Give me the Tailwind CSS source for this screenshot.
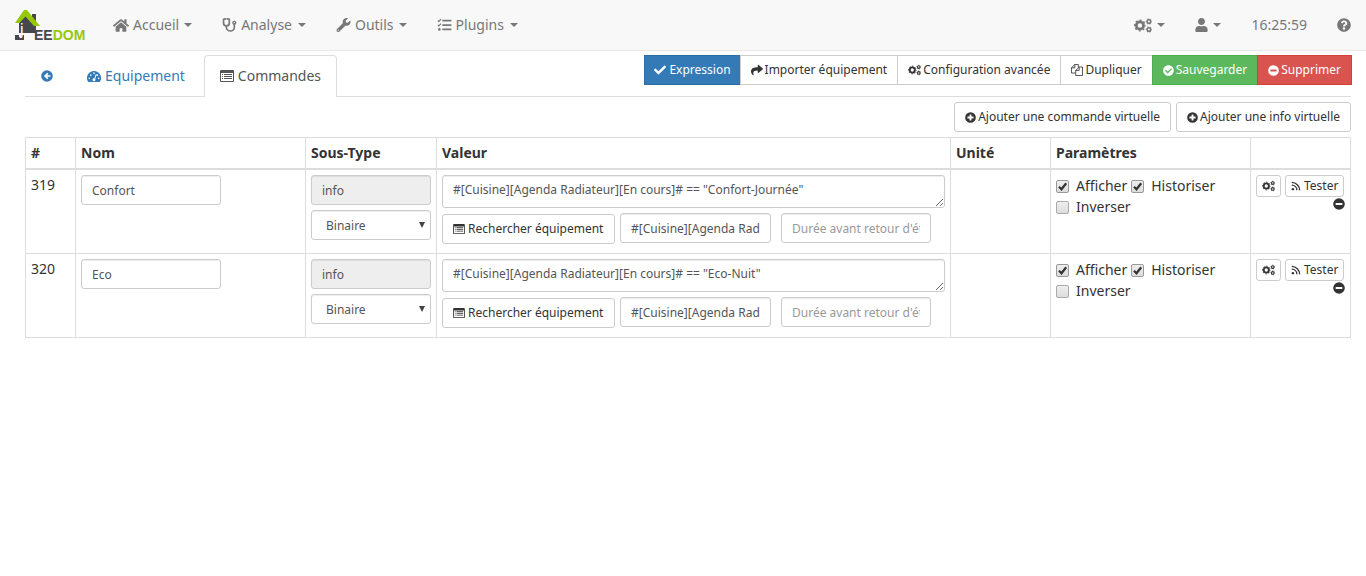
<!DOCTYPE html>
<html lang="fr">
<head>
<meta charset="utf-8">
<meta name="viewport" content="width=device-width, initial-scale=1">
<title>Jeedom - Commandes</title>
<script src="https://cdn.jsdelivr.net/npm/@tailwindcss/browser@4"></script>
</head>
<body class="bg-white font-['Noto_Sans',sans-serif] text-sm leading-5 text-[#333]">

<svg class="hidden" aria-hidden="true">
  <symbol id="home" viewBox="0 0 576 512"><path d="M280 150 96 301v163a16 16 0 0 0 16 16h112a16 16 0 0 0 16-16v-112h96v112a16 16 0 0 0 16 16h112a16 16 0 0 0 16-16V301L297 150a14 14 0 0 0-17 0z"/><path d="M572 251 488 182V44a12 12 0 0 0-12-12h-56a12 12 0 0 0-12 12v72l-90-74a48 48 0 0 0-61 0L4 251a12 12 0 0 0-1 17l25 31a12 12 0 0 0 17 2L280 107a14 14 0 0 1 16 0l235 194a12 12 0 0 0 17-2l26-31a12 12 0 0 0-2-17z"/></symbol>
  <symbol id="steth" viewBox="0 0 512 512"><path d="M110 34 38 50v130a106 106 0 0 0 212 0V50l-72-16M144 286v60a134 120 0 0 0 288 0V210" fill="none" stroke="currentColor" stroke-width="62" stroke-linejoin="round" stroke-linecap="round"/><circle cx="432" cy="176" r="54" fill="none" stroke="currentColor" stroke-width="48"/></symbol>
  <symbol id="wrench" viewBox="0 0 512 512"><path d="M507.73 109.1c-2.24-9.03-13.54-12.09-20.12-5.51l-74.36 74.36-67.88-11.31-11.31-67.88 74.36-74.36c6.62-6.62 3.43-17.9-5.66-20.16-47.38-11.74-99.55.91-136.58 37.93-39.64 39.64-50.55 97.1-34.05 147.2L18.74 402.76c-24.99 24.99-24.99 65.51 0 90.5 24.99 24.99 65.51 24.99 90.5 0l213.21-213.21c50.12 16.71 107.47 5.68 147.37-34.22 37.07-37.07 49.7-89.32 37.91-136.73zM64 472c-13.25 0-24-10.75-24-24 0-13.26 10.75-24 24-24s24 10.74 24 24c0 13.25-10.75 24-24 24z"/></symbol>
  <symbol id="tasks" viewBox="0 0 512 512"><path d="M176 64h320a16 16 0 0 1 16 16v32a16 16 0 0 1-16 16H176zM176 224h320a16 16 0 0 1 16 16v32a16 16 0 0 1-16 16H176zM176 384h320a16 16 0 0 1 16 16v32a16 16 0 0 1-16 16H176z"/><path d="m14 92 38 36 76-82M14 252l38 36 76-82" fill="none" stroke="currentColor" stroke-width="42"/><circle cx="66" cy="416" r="48"/></symbol>
  <symbol id="cogs" viewBox="10 0 620 512"><g fill="none" stroke="currentColor"><circle cx="214" cy="256" r="124" stroke-width="92"/><circle cx="214" cy="256" r="184" stroke-width="44" pathLength="16" stroke-dasharray="1 1" stroke-dashoffset=".5"/><circle cx="524" cy="118" r="62" stroke-width="52"/><circle cx="524" cy="118" r="96" stroke-width="28" pathLength="12" stroke-dasharray="1 1" stroke-dashoffset=".5"/><circle cx="524" cy="394" r="62" stroke-width="52"/><circle cx="524" cy="394" r="96" stroke-width="28" pathLength="12" stroke-dasharray="1 1" stroke-dashoffset=".5"/></g></symbol>
  <symbol id="user" viewBox="0 0 448 512"><path d="M224 256c70.7 0 128-57.3 128-128S294.7 0 224 0 96 57.3 96 128s57.3 128 128 128zm89.6 32h-16.7c-22.2 10.2-46.9 16-72.9 16s-50.6-5.8-72.9-16h-16.7C60.2 288 0 348.2 0 422.4V464c0 26.5 21.5 48 48 48h352c26.5 0 48-21.5 48-48v-41.6c0-74.2-60.2-134.4-134.4-134.4z"/></symbol>
  <symbol id="help" viewBox="0 0 512 512"><path d="M504 256c0 136.997-111.043 248-248 248S8 392.997 8 256C8 119.083 119.043 8 256 8s248 111.083 248 248zM262.655 90c-54.497 0-89.255 22.957-116.549 63.758-3.536 5.286-2.353 12.415 2.715 16.258l34.699 26.31c5.205 3.947 12.621 3.008 16.665-2.122 17.864-22.658 30.113-35.797 57.303-35.797 20.429 0 45.698 13.148 45.698 32.958 0 14.976-12.363 22.667-32.534 33.976C247.128 238.528 216 254.941 216 296v4c0 6.627 5.373 12 12 12h56c6.627 0 12-5.373 12-12v-1.333c0-28.462 83.186-29.647 83.186-106.667 0-58.002-60.165-102-116.531-102zM256 338c-25.365 0-46 20.635-46 46 0 25.364 20.635 46 46 46s46-20.636 46-46c0-25.364-20.635-46-46-46z"/></symbol>
  <symbol id="back" viewBox="0 0 512 512"><path fill-rule="evenodd" d="M256 8a248 248 0 1 0 0 496 248 248 0 0 0 0-496zM290 382a24 24 0 0 1-34 1L143 273a24 24 0 0 1 0-34l113-110a24 24 0 0 1 34 1l16 16a24 24 0 0 1-1 34l-46 44h125a24 24 0 0 1 24 24v16a24 24 0 0 1-24 24H259l46 44a24 24 0 0 1 1 34z"/></symbol>
  <symbol id="dash" viewBox="0 0 576 512"><path fill-rule="evenodd" d="M288 32A288 288 0 0 0 39 465a32 32 0 0 0 27 15h444a32 32 0 0 0 27-15A288 288 0 0 0 288 32zm0 52a34 34 0 1 1 0 68 34 34 0 0 1 0-68zM96 364a34 34 0 1 1 0-68 34 34 0 0 1 0 68zm58-130a34 34 0 1 1 0-68 34 34 0 0 1 0 68zm190 174a60 60 0 1 1-44-74l54-160a20 20 0 0 1 38 12l-54 162a62 62 0 0 1 6 60zm76-174a34 34 0 1 1 10-68 34 34 0 0 1-10 68zm60 130a34 34 0 1 1 0-68 34 34 0 0 1 0 68z"/></symbol>
  <symbol id="list" viewBox="0 0 14 12"><path fill-rule="evenodd" d="M1 0h12a1 1 0 0 1 1 1v10a1 1 0 0 1-1 1H1a1 1 0 0 1-1-1V1a1 1 0 0 1 1-1zm0 3v8h12V3zM2 4h1v1H2zM4 4h8v1H4zM2 6h1v1H2zM4 6h8v1H4zM2 8h1v1H2zM4 8h8v1H4z"/></symbol>
  <symbol id="check" viewBox="0 0 512 512"><path d="M173.898 439.404l-166.4-166.4c-9.997-9.997-9.997-26.206 0-36.204l36.203-36.204c9.997-9.998 26.207-9.998 36.204 0L192 312.69 432.095 72.596c9.997-9.997 26.207-9.997 36.204 0l36.203 36.204c9.997 9.997 9.997 26.206 0 36.204l-294.4 294.401c-9.998 9.997-26.207 9.997-36.204-.001z"/></symbol>
  <symbol id="share" viewBox="0 0 512 512"><path d="M503.691 189.836L327.687 37.851C312.281 24.546 288 35.347 288 56.015v80.053C127.371 137.907 0 170.1 0 322.326c0 61.441 39.581 122.309 83.333 154.132 13.653 9.931 33.111-2.533 28.077-18.631C66.066 312.814 132.917 274.316 288 272.085V360c0 20.7 24.3 31.453 39.687 18.164l176.004-152c11.071-9.562 11.086-26.753 0-36.328z"/></symbol>
  <symbol id="copy" viewBox="0 0 14 14"><path d="M5 10.500H.5v-6l4-4h4v3M4.500.5v4h-4M9.500 3.500h4v10h-8v-6zv4h-4" fill="none" stroke="currentColor"/></symbol>
  <symbol id="okc" viewBox="0 0 512 512"><path d="M504 256c0 136.967-111.033 248-248 248S8 392.967 8 256 119.033 8 256 8s248 111.033 248 248zM227.314 387.314l184-184c6.248-6.248 6.248-16.379 0-22.627l-22.627-22.627c-6.248-6.249-16.379-6.249-22.628 0L216 308.118l-70.059-70.059c-6.248-6.248-16.379-6.248-22.628 0l-22.627 22.627c-6.248 6.248-6.248 16.379 0 22.627l104 104c6.249 6.249 16.379 6.249 22.628.001z"/></symbol>
  <symbol id="minus" viewBox="0 0 512 512"><path fill-rule="evenodd" d="M256 8a248 248 0 1 0 0 496 248 248 0 0 0 0-496zM124 212h264a12 12 0 0 1 12 12v64a12 12 0 0 1-12 12H124a12 12 0 0 1-12-12v-64a12 12 0 0 1 12-12z"/></symbol>
  <symbol id="plus" viewBox="0 0 512 512"><path fill-rule="evenodd" d="M256 8a248 248 0 1 0 0 496 248 248 0 0 0 0-496zm-32 104h64a12 12 0 0 1 12 12v88h88a12 12 0 0 1 12 12v64a12 12 0 0 1-12 12h-88v88a12 12 0 0 1-12 12h-64a12 12 0 0 1-12-12v-88h-88a12 12 0 0 1-12-12v-64a12 12 0 0 1 12-12h88v-88a12 12 0 0 1 12-12z"/></symbol>
  <symbol id="rss" viewBox="0 0 448 512"><circle cx="64" cy="416" r="62"/><path d="M8 208a272 272 0 0 1 264 264M8 70a404 404 0 0 1 402 402" fill="none" stroke="currentColor" stroke-width="68"/></symbol>
  <symbol id="caret" viewBox="0 0 8 4"><path d="M0 0h8L4 4z"/></symbol>
  <symbol id="tick" viewBox="0 0 13 13"><path d="m3 6.800 2.500 2.500 4.700-6" fill="none" stroke="#333" stroke-width="2.200"/></symbol>
</svg>

<nav class="flex min-h-[51px] items-center justify-between border-b border-[#e7e7e7] bg-[#f8f8f8] text-[#777]">
  <div class="flex items-center">
    <a href="#" class="block pl-[15px]" aria-label="Jeedom">
      <svg class="block h-8 w-[72px] overflow-visible" viewBox="0 0 72 32">
        <path d="M17 5h4v19H4V14l7-8 6 6z" fill="#46474c"/>
        <path d="M0 26h4v2h2v-2h3v5H0z" fill="#46474c"/>
        <path d="M9 1h3l13 16h-6L10.500 7.500 4 14H0z" fill="#96c80a"/>
        <text x="5" y="26" font-family="Liberation Sans, sans-serif" font-size="16" fill="#f8f8f8">j</text>
        <text x="19" y="31" font-family="Liberation Sans, sans-serif" font-size="14" font-weight="700" fill="#46474c">EE<tspan fill="#96c80a">DOM</tspan></text>
      </svg>
    </a>
    <a href="#" class="ml-[11px] flex items-center gap-1 px-[15px]"><svg class="h-[15px] w-4" fill="currentColor"><use href="#home"/></svg>Accueil <svg class="ml-px h-1 w-2" fill="currentColor"><use href="#caret"/></svg></a>
    <a href="#" class="flex items-center gap-1 px-[15px]"><svg class="h-[14px] w-[15px]" fill="currentColor"><use href="#steth"/></svg>Analyse <svg class="ml-[2px] h-1 w-2" fill="currentColor"><use href="#caret"/></svg></a>
    <a href="#" class="flex items-center gap-1 px-[15px]"><svg class="h-[14px] w-[15px]" fill="currentColor"><use href="#wrench"/></svg>Outils <svg class="ml-px h-1 w-2" fill="currentColor"><use href="#caret"/></svg></a>
    <a href="#" class="flex items-center gap-1 px-[15px]"><svg class="h-[14px] w-[15px]" fill="currentColor"><use href="#tasks"/></svg>Plugins <svg class="ml-[2px] h-1 w-2" fill="currentColor"><use href="#caret"/></svg></a>
  </div>
  <div class="flex items-center">
    <a href="#" class="flex items-center gap-[5px] px-[15px]" aria-label="Configuration"><svg class="h-[15px] w-[18px]" fill="currentColor"><use href="#cogs"/></svg><svg class="h-1 w-2" fill="currentColor"><use href="#caret"/></svg></a>
    <a href="#" class="flex items-center gap-[5px] px-[15px]" aria-label="Utilisateur"><svg class="h-[14px] w-[13px]" fill="currentColor"><use href="#user"/></svg><svg class="h-1 w-2" fill="currentColor"><use href="#caret"/></svg></a>
    <a href="#" class="px-[15px]">16:25:59</a>
    <a href="#" class="px-[15px]" aria-label="Aide"><svg class="h-[14px] w-[14px]" fill="currentColor"><use href="#help"/></svg></a>
  </div>
</nav>

<main class="pt-1 pr-[15px] pl-[25px]">
  <div class="flex items-start justify-between border-b border-[#ddd]">
    <div class="-mb-px flex text-[#337ab7]">
      <a href="#" class="flex h-[42px] items-center px-4" aria-label="Retour"><svg class="h-3 w-3" fill="currentColor"><use href="#back"/></svg></a>
      <a href="#" class="ml-[2px] flex h-[42px] items-center gap-1 px-4"><svg class="h-[13px] w-[14px]" fill="currentColor"><use href="#dash"/></svg>Equipement</a>
      <a href="#" class="ml-[3px] flex h-[42px] items-center gap-1 rounded-t border border-b-0 border-[#ddd] bg-white px-[15px] pb-px text-[#555]"><svg class="h-3 w-[14px]" fill="currentColor"><use href="#list"/></svg>Commandes</a>
    </div>
    <div class="-mr-px flex text-xs">
      <button class="flex h-[30px] items-center gap-[3px] border border-[#2e6da4] bg-[#337ab7] px-[9px] text-white"><svg class="h-3 w-3" fill="currentColor"><use href="#check"/></svg>Expression</button>
      <button class="-ml-px flex h-[30px] items-center gap-[2px] border border-[#ccc] px-[10px]"><svg class="h-3 w-3" fill="currentColor"><use href="#share"/></svg>Importer équipement</button>
      <button class="-ml-px flex h-[30px] items-center gap-[2px] border border-[#ccc] px-[10px]"><svg class="h-3 w-[13px]" fill="currentColor"><use href="#cogs"/></svg>Configuration avancée</button>
      <button class="-ml-px flex h-[30px] items-center gap-[2px] border border-[#ccc] px-[10px]"><svg class="h-3 w-3" fill="currentColor"><use href="#copy"/></svg>Dupliquer</button>
      <button class="-ml-px flex h-[30px] items-center gap-[2px] border border-[#4cae4c] bg-[#5cb85c] px-[10px] text-white"><svg class="h-[11px] w-[11px]" fill="currentColor"><use href="#okc"/></svg>Sauvegarder</button>
      <button class="-ml-px flex h-[30px] items-center gap-[2px] border border-[#d43f3a] bg-[#d9534f] px-[10px] text-white"><svg class="h-[11px] w-[11px]" fill="currentColor"><use href="#minus"/></svg>Supprimer</button>
    </div>
  </div>

  <div class="flex justify-end gap-[5px] py-[5px] text-xs">
    <button class="flex h-[30px] items-center gap-[2px] rounded-[3px] border border-[#ccc] px-[10px]"><svg class="h-[11px] w-[11px]" fill="currentColor"><use href="#plus"/></svg>Ajouter une commande virtuelle</button>
    <button class="flex h-[30px] items-center gap-[2px] rounded-[3px] border border-[#ccc] px-[10px]"><svg class="h-[11px] w-[11px]" fill="currentColor"><use href="#plus"/></svg>Ajouter une info virtuelle</button>
  </div>

  <table class="w-full table-fixed border-collapse border border-[#ddd] [&_td]:border [&_td]:border-[#ddd] [&_td]:p-[5px] [&_td]:align-top [&_th]:border [&_th]:border-b-2 [&_th]:border-[#ddd] [&_th]:p-[5px] [&_th]:text-left [&_th]:font-bold">
    <colgroup><col class="w-[50px]"><col class="w-[230px]"><col class="w-[131px]"><col><col class="w-[100px]"><col class="w-[200px]"><col class="w-[100px]"></colgroup>
    <thead><tr><th>#</th><th>Nom</th><th>Sous-Type</th><th>Valeur</th><th>Unité</th><th>Paramètres</th><th></th></tr></thead>
    <tbody>
      <tr>
        <td>319</td>
        <td><input type="text" aria-label="Nom" value="Confort" class="block h-[30px] w-[140px] rounded-[3px] border border-[#ccc] px-[10px] text-xs text-[#555] shadow-[inset_0_1px_1px_rgba(0,0,0,0.075)]"></td>
        <td>
          <input type="text" aria-label="Type" value="info" disabled class="block h-[30px] w-full rounded-[3px] border border-[#ccc] bg-[#eee] px-[10px] text-xs text-[#555] shadow-[inset_0_1px_1px_rgba(0,0,0,0.075)]">
          <div class="mt-[5px] grid items-center">
            <select aria-label="Sous-type" class="col-start-1 row-start-1 h-[30px] w-full appearance-none rounded-[3px] border border-[#ccc] bg-white px-[14px] pt-px text-xs text-[#555] shadow-[inset_0_1px_1px_rgba(0,0,0,0.075)]"><option>Binaire</option></select>
            <svg class="pointer-events-none col-start-1 row-start-1 mr-[6px] h-[6px] w-[6px] justify-self-end" viewBox="0 0 6 6"><path d="M0 0h6L3 6z" fill="#444"/></svg>
          </div>
        </td>
        <td>
          <textarea aria-label="Valeur" class="block h-[33px] w-full resize rounded-[3px] border border-[#ccc] px-[10px] py-[5px] text-xs leading-[18px] text-[#555] shadow-[inset_0_1px_1px_rgba(0,0,0,0.075)]">#[Cuisine][Agenda Radiateur][En cours]# == "Confort-Journée"</textarea>
          <div class="mt-[5px] flex pb-1 text-xs">
            <button class="mt-px flex h-[30px] w-[173px] items-center gap-[3px] rounded-[3px] border border-[#ccc] px-[10px]"><svg class="h-[10px] w-3" fill="currentColor"><use href="#list"/></svg>Rechercher équipement</button>
            <input type="text" aria-label="Valeur retournée" value="#[Cuisine][Agenda Radiateur][En cours]#" class="ml-[5px] h-[30px] w-[151px] rounded-[3px] border border-[#ccc] px-[10px] text-[#555] shadow-[inset_0_1px_1px_rgba(0,0,0,0.075)]">
            <input type="text" aria-label="Durée" placeholder="Durée avant retour d'état (min)" class="ml-[10px] h-[30px] w-[150px] rounded-[3px] border border-[#ccc] px-[10px] text-[#555] shadow-[inset_0_1px_1px_rgba(0,0,0,0.075)] placeholder:text-[#999]">
          </div>
        </td>
        <td></td>
        <td>
          <div class="flex flex-wrap gap-x-1 leading-[21px]">
            <label class="flex items-center gap-[7px]"><span class="mt-[2px] grid"><input type="checkbox" checked class="col-start-1 row-start-1 h-[13px] w-[13px] appearance-none rounded-[2px] border border-[#999] bg-linear-to-b from-[#eee] to-[#ddd]"><svg class="pointer-events-none col-start-1 row-start-1 h-[13px] w-[13px]"><use href="#tick"/></svg></span>Afficher</label>
            <label class="flex items-center gap-[7px]"><span class="mt-[2px] grid"><input type="checkbox" checked class="col-start-1 row-start-1 h-[13px] w-[13px] appearance-none rounded-[2px] border border-[#999] bg-linear-to-b from-[#eee] to-[#ddd]"><svg class="pointer-events-none col-start-1 row-start-1 h-[13px] w-[13px]"><use href="#tick"/></svg></span>Historiser</label>
            <label class="flex items-center gap-[7px]"><input type="checkbox" class="mt-[2px] h-[13px] w-[13px] appearance-none rounded-[2px] border border-[#aaa] bg-linear-to-b from-[#eee] to-[#ddd]">Inverser</label>
          </div>
        </td>
        <td>
          <div class="flex flex-wrap gap-x-1 text-xs">
            <button aria-label="Configurer" class="flex h-[22px] w-[25px] items-center justify-center rounded-[3px] border border-[#ccc]"><svg class="h-3 w-[13px]" fill="currentColor"><use href="#cogs"/></svg></button>
            <button class="flex h-[22px] items-center gap-[3px] rounded-[3px] border border-[#ccc] px-[5px]"><svg class="h-[11px] w-[10px] pb-px" fill="currentColor"><use href="#rss"/></svg>Tester</button>
            <button aria-label="Supprimer" class="mt-px ml-auto h-3 w-3"><svg class="h-3 w-3" fill="currentColor"><use href="#minus"/></svg></button>
          </div>
        </td>
      </tr>
      <tr>
        <td>320</td>
        <td><input type="text" aria-label="Nom" value="Eco" class="block h-[30px] w-[140px] rounded-[3px] border border-[#ccc] px-[10px] text-xs text-[#555] shadow-[inset_0_1px_1px_rgba(0,0,0,0.075)]"></td>
        <td>
          <input type="text" aria-label="Type" value="info" disabled class="block h-[30px] w-full rounded-[3px] border border-[#ccc] bg-[#eee] px-[10px] text-xs text-[#555] shadow-[inset_0_1px_1px_rgba(0,0,0,0.075)]">
          <div class="mt-[5px] grid items-center">
            <select aria-label="Sous-type" class="col-start-1 row-start-1 h-[30px] w-full appearance-none rounded-[3px] border border-[#ccc] bg-white px-[14px] pt-px text-xs text-[#555] shadow-[inset_0_1px_1px_rgba(0,0,0,0.075)]"><option>Binaire</option></select>
            <svg class="pointer-events-none col-start-1 row-start-1 mr-[6px] h-[6px] w-[6px] justify-self-end" viewBox="0 0 6 6"><path d="M0 0h6L3 6z" fill="#444"/></svg>
          </div>
        </td>
        <td>
          <textarea aria-label="Valeur" class="block h-[33px] w-full resize rounded-[3px] border border-[#ccc] px-[10px] py-[5px] text-xs leading-[18px] text-[#555] shadow-[inset_0_1px_1px_rgba(0,0,0,0.075)]">#[Cuisine][Agenda Radiateur][En cours]# == "Eco-Nuit"</textarea>
          <div class="mt-[5px] flex pb-1 text-xs">
            <button class="mt-px flex h-[30px] w-[173px] items-center gap-[3px] rounded-[3px] border border-[#ccc] px-[10px]"><svg class="h-[10px] w-3" fill="currentColor"><use href="#list"/></svg>Rechercher équipement</button>
            <input type="text" aria-label="Valeur retournée" value="#[Cuisine][Agenda Radiateur][En cours]#" class="ml-[5px] h-[30px] w-[151px] rounded-[3px] border border-[#ccc] px-[10px] text-[#555] shadow-[inset_0_1px_1px_rgba(0,0,0,0.075)]">
            <input type="text" aria-label="Durée" placeholder="Durée avant retour d'état (min)" class="ml-[10px] h-[30px] w-[150px] rounded-[3px] border border-[#ccc] px-[10px] text-[#555] shadow-[inset_0_1px_1px_rgba(0,0,0,0.075)] placeholder:text-[#999]">
          </div>
        </td>
        <td></td>
        <td>
          <div class="flex flex-wrap gap-x-1 leading-[21px]">
            <label class="flex items-center gap-[7px]"><span class="mt-[2px] grid"><input type="checkbox" checked class="col-start-1 row-start-1 h-[13px] w-[13px] appearance-none rounded-[2px] border border-[#999] bg-linear-to-b from-[#eee] to-[#ddd]"><svg class="pointer-events-none col-start-1 row-start-1 h-[13px] w-[13px]"><use href="#tick"/></svg></span>Afficher</label>
            <label class="flex items-center gap-[7px]"><span class="mt-[2px] grid"><input type="checkbox" checked class="col-start-1 row-start-1 h-[13px] w-[13px] appearance-none rounded-[2px] border border-[#999] bg-linear-to-b from-[#eee] to-[#ddd]"><svg class="pointer-events-none col-start-1 row-start-1 h-[13px] w-[13px]"><use href="#tick"/></svg></span>Historiser</label>
            <label class="flex items-center gap-[7px]"><input type="checkbox" class="mt-[2px] h-[13px] w-[13px] appearance-none rounded-[2px] border border-[#aaa] bg-linear-to-b from-[#eee] to-[#ddd]">Inverser</label>
          </div>
        </td>
        <td>
          <div class="flex flex-wrap gap-x-1 text-xs">
            <button aria-label="Configurer" class="flex h-[22px] w-[25px] items-center justify-center rounded-[3px] border border-[#ccc]"><svg class="h-3 w-[13px]" fill="currentColor"><use href="#cogs"/></svg></button>
            <button class="flex h-[22px] items-center gap-[3px] rounded-[3px] border border-[#ccc] px-[5px]"><svg class="h-[11px] w-[10px] pb-px" fill="currentColor"><use href="#rss"/></svg>Tester</button>
            <button aria-label="Supprimer" class="mt-px ml-auto h-3 w-3"><svg class="h-3 w-3" fill="currentColor"><use href="#minus"/></svg></button>
          </div>
        </td>
      </tr>
    </tbody>
  </table>
</main>
</body>
</html>
